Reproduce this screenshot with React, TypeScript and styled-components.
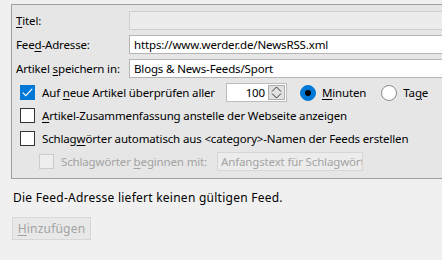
import React from "react";
import styled, { createGlobalStyle } from "styled-components";

const Global = createGlobalStyle`
  html, body { margin: 0; padding: 0; background: #f0f0f0; overflow: hidden; }
  body { font-family: "Noto Sans", "Open Sans", sans-serif; font-size: 12px; color: #000; }
  #root { width: 442px; height: 260px; overflow: hidden; }
`;

const Page = styled.div`
  padding: 4px 0 0 11px;
  display: flex;
  flex-direction: column;
  width: 460px;
`;

const Frame = styled.div`
  border: 1px solid #a0a0a0;
  border-right: none;
  background: #e6e6e6;
  padding: 6px 0 5px 0;
  display: flex;
  flex-direction: column;
  font-size: 11.5px;
  letter-spacing: -0.15px;
`;

const FieldGrid = styled.div`
  display: grid;
  grid-template-columns: 117px 1fr;
  row-gap: 5px;
  align-items: center;
  margin-bottom: 3px;
`;

const Label = styled.label`
  padding-left: 4px;
  white-space: nowrap;
`;

const U = styled.span`
  text-decoration: underline;
  text-underline-offset: 2px;
`;

const TextInput = styled.div<{ $disabled?: boolean }>`
  height: 19px;
  box-sizing: border-box;
  border: 1px solid ${(p) => (p.$disabled ? "#cfcfcf" : "#b4b4b4")};
  background: ${(p) => (p.$disabled ? "#ececec" : "#ffffff")};
  display: flex;
  align-items: center;
  padding-left: 4px;
  white-space: nowrap;
  overflow: hidden;
`;

const CheckRow = styled.div<{ $indent?: number }>`
  height: 23px;
  display: flex;
  align-items: center;
  padding-left: ${(p) => p.$indent ?? 8}px;
  white-space: nowrap;
`;

const Box = styled.span<{ $checked?: boolean; $disabled?: boolean }>`
  width: 15px;
  height: 15px;
  box-sizing: border-box;
  border: 1px solid ${(p) => (p.$disabled ? "#cccccc" : p.$checked ? "#0078d7" : "#333333")};
  background: ${(p) => (p.$disabled ? "#eeeeee" : p.$checked ? "#0078d7" : "#ffffff")};
  display: inline-flex;
  align-items: center;
  justify-content: center;
  margin-right: 7px;
  flex: none;
`;

const RowText = styled.span<{ $disabled?: boolean }>`
  color: ${(p) => (p.$disabled ? "#a3a3a3" : "#000")};
`;

const Spin = styled.div`
  margin-left: 11px;
  width: 61px;
  height: 19px;
  box-sizing: border-box;
  border: 1px solid #bcbcbc;
  background: #fff;
  display: flex;
  align-items: center;
  justify-content: flex-end;
  padding: 0 1px;
  flex: none;
`;

const SpinValue = styled.span`
  margin-right: 3px;
`;

const SpinButton = styled.span`
  width: 17px;
  height: 15px;
  box-sizing: border-box;
  border: 1px solid #adadad;
  background: #e1e1e1;
  display: flex;
  align-items: center;
  justify-content: center;
`;

const Radio = styled.span<{ $checked?: boolean }>`
  width: 16px;
  height: 16px;
  box-sizing: border-box;
  border-radius: 50%;
  border: 1px solid ${(p) => (p.$checked ? "#0078d7" : "#8a8a8a")};
  background: ${(p) => (p.$checked ? "#0078d7" : "#fff")};
  display: inline-flex;
  align-items: center;
  justify-content: center;
  margin-right: 6px;
  flex: none;
  &::after {
    content: "";
    display: ${(p) => (p.$checked ? "block" : "none")};
    width: 6px;
    height: 6px;
    border-radius: 50%;
    background: #000;
  }
`;

const RadioLabel = styled.span<{ $gapBefore: number }>`
  display: inline-flex;
  align-items: center;
  margin-left: ${(p) => p.$gapBefore}px;
`;

const SmallInput = styled.div`
  margin-left: 10px;
  width: 146px;
  height: 19px;
  box-sizing: border-box;
  border: 1px solid #d6d6d6;
  background: #ececec;
  color: #a3a3a3;
  display: flex;
  align-items: center;
  padding-left: 3px;
  overflow: hidden;
  white-space: nowrap;
  flex: none;
`;

const Message = styled.div`
  margin: 11px 0 0 2px;
  height: 16px;
  line-height: 16px;
  letter-spacing: 0.25px;
`;

const Button = styled.div`
  margin-top: 11px;
  width: 79px;
  height: 23px;
  box-sizing: border-box;
  border: 1px solid #d7d7d7;
  background: #e8e8e8;
  color: #a3a3a3;
  display: flex;
  align-items: center;
  justify-content: center;
  margin-left: 1px;
  letter-spacing: 0.2px;
`;

const Check = () => (
  <svg width="11" height="9" viewBox="0 0 11 9">
    <path d="M0.8 4.6 L3.8 7.6 L10.2 0.8" fill="none" stroke="#fff" strokeWidth="1.2" />
  </svg>
);

const Chevrons = () => (
  <svg width="11" height="13" viewBox="0 0 11 13">
    <path d="M1 5.5 L5.5 1 L10 5.5" fill="none" stroke="#333" strokeWidth="1" />
    <path d="M1 7.5 L5.5 12 L10 7.5" fill="none" stroke="#333" strokeWidth="1" />
  </svg>
);

export default function App() {
  return (
    <>
      <Global />
      <Page>
        <Frame>
          <FieldGrid>
            <Label><U>T</U>itel:</Label>
            <TextInput $disabled />
            <Label>Fee<U>d</U>-Adresse:</Label>
            <TextInput>https://www.werder.de/NewsRSS.xml</TextInput>
            <Label>Artikel <U>s</U>peichern in:</Label>
            <TextInput>Blogs &amp; News-Feeds/Sport</TextInput>
          </FieldGrid>
          <CheckRow>
            <Box $checked><Check /></Box>
            <RowText>Auf <U>n</U>eue Artikel überprüfen aller</RowText>
            <Spin>
              <SpinValue>100</SpinValue>
              <SpinButton><Chevrons /></SpinButton>
            </Spin>
            <RadioLabel $gapBefore={13}>
              <Radio $checked />
              <span><U>M</U>inuten</span>
            </RadioLabel>
            <RadioLabel $gapBefore={15}>
              <Radio />
              <span>Ta<U>g</U>e</span>
            </RadioLabel>
          </CheckRow>
          <CheckRow>
            <Box />
            <RowText><U>A</U>rtikel-Zusammenfassung anstelle der Webseite anzeigen</RowText>
          </CheckRow>
          <CheckRow>
            <Box />
            <RowText>Schlag<U>w</U>örter automatisch aus &lt;category&gt;-Namen der Feeds erstellen</RowText>
          </CheckRow>
          <CheckRow $indent={27}>
            <Box $disabled />
            <RowText $disabled>Schlagwörter <U>b</U>eginnen mit:</RowText>
            <SmallInput>Anfangstext für Schlagwörter</SmallInput>
          </CheckRow>
        </Frame>
        <Message>Die Feed-Adresse liefert keinen gültigen Feed.</Message>
        <Button><span><U>H</U>inzufügen</span></Button>
      </Page>
    </>
  );
}
